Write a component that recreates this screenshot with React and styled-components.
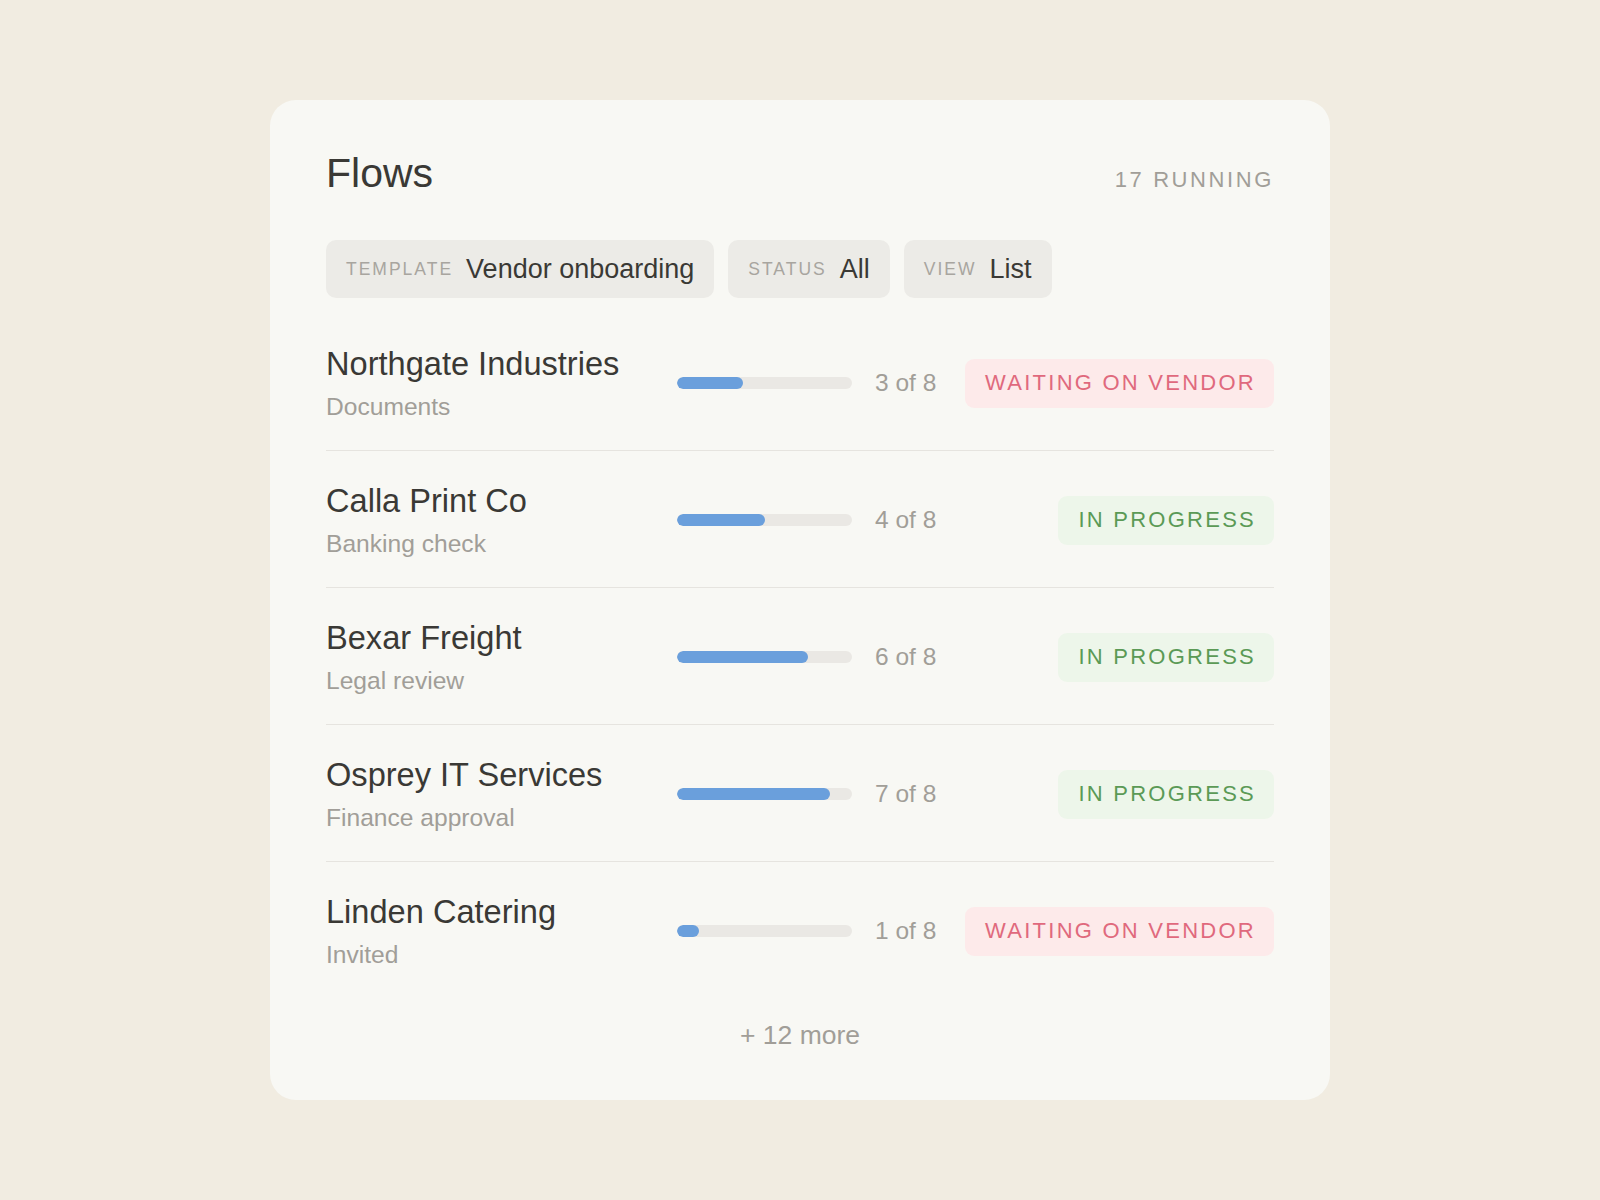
import React from 'react';
import styled, { createGlobalStyle } from 'styled-components';

const GlobalStyle = createGlobalStyle`
	* {
		box-sizing: border-box;
	}
	body {
		margin: 0;
		background: #f1ece1;
		font-family: 'Liberation Sans', Arial, sans-serif;
		-webkit-font-smoothing: antialiased;
	}
`;

const Page = styled.div`
	min-height: 100vh;
	display: flex;
	align-items: center;
	justify-content: center;
`;

const Card = styled.div`
	width: 1060px;
	background: #f8f8f4;
	border-radius: 26px;
	padding: 48px 56px;
	display: flex;
	flex-direction: column;
`;

const Header = styled.div`
	display: flex;
	align-items: baseline;
	justify-content: space-between;
`;

const Title = styled.h1`
	margin: 0;
	font-size: 41px;
	line-height: 50px;
	font-weight: 400;
	color: #3a3935;
`;

const Running = styled.span`
	font-size: 22px;
	letter-spacing: 2.6px;
	color: #a19e98;
`;

const Filters = styled.div`
	display: flex;
	gap: 14px;
	margin-top: 42px;
	margin-bottom: 16px;
`;

const Chip = styled.div`
	height: 58px;
	display: flex;
	align-items: center;
	gap: 13px;
	padding: 0 20px;
	background: #ecebe7;
	border-radius: 10px;
`;

const ChipLabel = styled.span`
	font-size: 17.5px;
	letter-spacing: 2px;
	color: #a8a59f;
`;

const ChipValue = styled.span`
	font-size: 27px;
	color: #3a3935;
`;

const Row = styled.div`
	display: grid;
	grid-template-columns: 328px 175px 65px 1fr;
	column-gap: 23px;
	align-items: center;
	padding: 30px 0 28px;
	border-bottom: ${p => (p.$last ? 'none' : '1px solid #e6e4df')};
`;

const Name = styled.div`
	font-size: 32.6px;
	line-height: 40px;
	color: #3a3935;
	white-space: nowrap;
`;

const Step = styled.div`
	margin-top: 8px;
	font-size: 24.6px;
	line-height: 30px;
	color: #a19e98;
`;

const Track = styled.div`
	height: 12px;
	border-radius: 6px;
	background: #eae8e4;
	overflow: hidden;
`;

const Fill = styled.div`
	height: 100%;
	border-radius: 6px;
	background: #6a9fdc;
`;

const Count = styled.span`
	font-size: 24.5px;
	color: #a19e98;
	white-space: nowrap;
`;

const Badge = styled.span`
	justify-self: end;
	height: 49px;
	display: inline-flex;
	align-items: center;
	padding: 0 18px 0 20px;
	border-radius: 9px;
	font-size: 22px;
	letter-spacing: 2.25px;
	background: ${p => (p.$tone === 'wait' ? '#fdeaea' : '#edf6ea')};
	color: ${p => (p.$tone === 'wait' ? '#e0697d' : '#5b9a56')};
`;

const More = styled.div`
	margin-top: 20px;
	text-align: center;
	font-size: 26.5px;
	line-height: 34px;
	color: #a19e98;
`;

const flows = [
	{ name: 'Northgate Industries', step: 'Documents', done: 3, tone: 'wait' },
	{ name: 'Calla Print Co', step: 'Banking check', done: 4, tone: 'go' },
	{ name: 'Bexar Freight', step: 'Legal review', done: 6, tone: 'go' },
	{ name: 'Osprey IT Services', step: 'Finance approval', done: 7, tone: 'go' },
	{ name: 'Linden Catering', step: 'Invited', done: 1, tone: 'wait' },
];

const filters = [
	['TEMPLATE', 'Vendor onboarding'],
	['STATUS', 'All'],
	['VIEW', 'List'],
];

const App = () => {
	return (
		<Page>
			<GlobalStyle />
			<Card>
				<Header>
					<Title>Flows</Title>
					<Running>17 RUNNING</Running>
				</Header>
				<Filters>
					{filters.map(([label, value]) => (
						<Chip key={label}>
							<ChipLabel>{label}</ChipLabel>
							<ChipValue>{value}</ChipValue>
						</Chip>
					))}
				</Filters>
				{flows.map((f, i) => (
					<Row key={f.name} $last={i === flows.length - 1}>
						<div>
							<Name>{f.name}</Name>
							<Step>{f.step}</Step>
						</div>
						<Track>
							<Fill style={{ width: `${(f.done / 8) * 100}%` }} />
						</Track>
						<Count>{f.done} of 8</Count>
						<Badge $tone={f.tone}>
							{f.tone === 'wait' ? 'WAITING ON VENDOR' : 'IN PROGRESS'}
						</Badge>
					</Row>
				))}
				<More>+ 12 more</More>
			</Card>
		</Page>
	);
};

export default App;
